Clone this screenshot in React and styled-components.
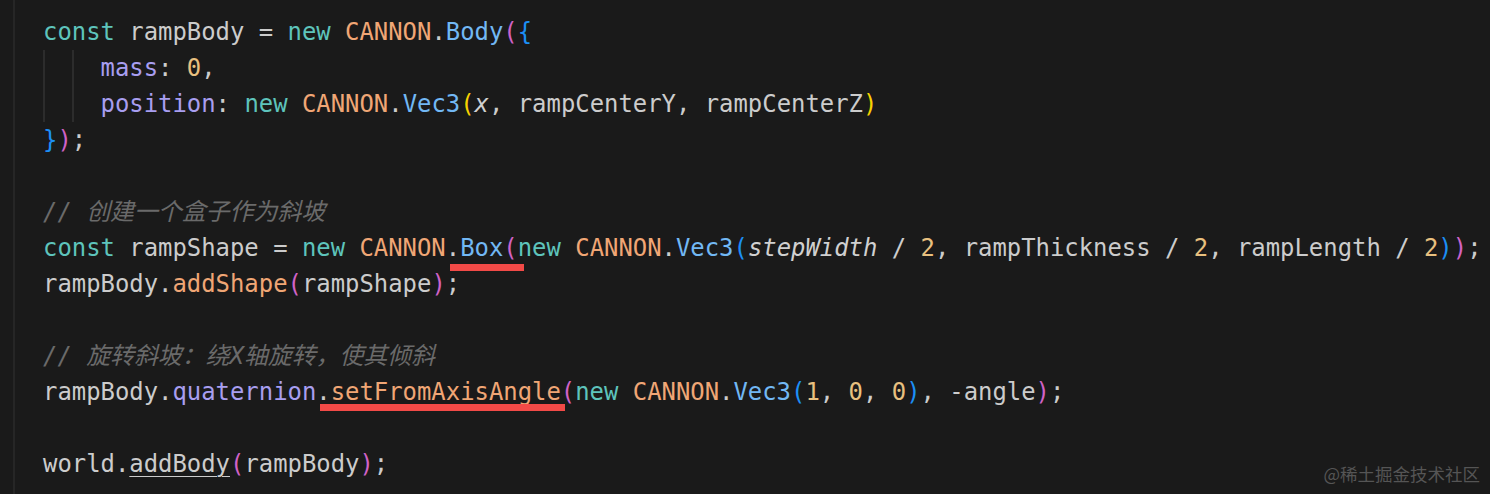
import React from "react";
import styled, { createGlobalStyle } from "styled-components";

const GlobalStyle = createGlobalStyle`
  html, body {
    margin: 0;
    padding: 0;
    background: #1a1a1a;
  }
`;

const Page = styled.div`
  position: relative;
  width: 1490px;
  height: 494px;
  background: #1a1a1a;
  overflow: hidden;
`;

const Editor = styled.div`
  margin-left: 13px;
  padding: 14px 0 12px 28px;
  border-left: 2px solid #262626;
  height: 100%;
  box-sizing: border-box;
  font-family: "DejaVu Sans Mono", "Noto Sans CJK SC", monospace;
  font-size: 23.9px;
  color: #cccccc;
`;

const Line = styled.div`
  height: 36px;
  line-height: 36px;
  white-space: pre;
`;

const Guide = styled.span`
  display: inline-block;
  width: 2ch;
  height: 36px;
  vertical-align: top;
  box-sizing: border-box;
  border-left: 2px solid #2c2c2c;
`;

const Kw = styled.span`
  color: #5ec4bc;
`;

const Cls = styled.span`
  color: #f0a675;
`;

const Fn = styled.span`
  color: #72b8f4;
`;

const Prop = styled.span`
  color: #a89ef0;
`;

const Num = styled.span`
  color: #e8c07f;
`;

const Param = styled.span`
  font-style: italic;
  color: #d0d0d0;
`;

const Cmt = styled.span`
  font-style: italic;
  color: #6a6a6a;
`;

const Linked = styled.span`
  text-decoration: underline;
  text-underline-offset: 4px;
  text-decoration-thickness: 1px;
`;

const bracketColors = {
  yellow: "#f7d200",
  pink: "#d062c6",
  blue: "#1c8ff5",
};

const Br = styled.span`
  color: ${(p) => bracketColors[p.$level]};
`;

const Marked = styled.span`
  position: relative;
  display: inline-block;
  height: 36px;
  vertical-align: top;

  &::after {
    content: "";
    position: absolute;
    left: ${(p) => p.$left}px;
    right: ${(p) => p.$right}px;
    top: ${(p) => p.$top}px;
    height: 7px;
    background: #f24a47;
  }
`;

const Watermark = styled.div`
  position: absolute;
  right: 10px;
  bottom: 8px;
  font-family: "Noto Sans CJK SC", "Noto Sans", sans-serif;
  font-size: 17.5px;
  color: #555555;
`;

export default function App() {
  return (
    <Page>
      <GlobalStyle />
      <Editor>
        <Line>
          <Kw>const</Kw> rampBody = <Kw>new</Kw> <Cls>CANNON</Cls>.<Fn>Body</Fn>
          <Br $level="pink">(</Br>
          <Br $level="blue">{"{"}</Br>
        </Line>
        <Line>
          <Guide />
          <Guide />
          <Prop>mass</Prop>: <Num>0</Num>,
        </Line>
        <Line>
          <Guide />
          <Guide />
          <Prop>position</Prop>: <Kw>new</Kw> <Cls>CANNON</Cls>.<Fn>Vec3</Fn>
          <Br $level="yellow">(</Br>
          <Param>x</Param>, rampCenterY, rampCenterZ
          <Br $level="yellow">)</Br>
        </Line>
        <Line>
          <Br $level="blue">{"}"}</Br>
          <Br $level="pink">)</Br>;
        </Line>
        <Line> </Line>
        <Line>
          <Cmt>// 创建一个盒子作为斜坡</Cmt>
        </Line>
        <Line>
          <Kw>const</Kw> rampShape = <Kw>new</Kw> <Cls>CANNON</Cls>
          <Marked $left={4} $right={-6} $top={34}>
            .<Fn>Box</Fn>
            <Br $level="pink">(</Br>
          </Marked>
          <Kw>new</Kw> <Cls>CANNON</Cls>.<Fn>Vec3</Fn>
          <Br $level="blue">(</Br>
          <Param>stepWidth</Param> / <Num>2</Num>, rampThickness / <Num>2</Num>,
          rampLength / <Num>2</Num>
          <Br $level="blue">)</Br>
          <Br $level="pink">)</Br>;
        </Line>
        <Line>
          rampBody.<Cls>addShape</Cls>
          <Br $level="pink">(</Br>rampShape<Br $level="pink">)</Br>;
        </Line>
        <Line> </Line>
        <Line>
          <Cmt>// 旋转斜坡：绕X轴旋转，使其倾斜</Cmt>
        </Line>
        <Line>
          rampBody.<Prop>quaternion</Prop>
          <Marked $left={4} $right={-4} $top={30}>
            .<Cls>setFromAxisAngle</Cls>
          </Marked>
          <Br $level="pink">(</Br>
          <Kw>new</Kw> <Cls>CANNON</Cls>.<Fn>Vec3</Fn>
          <Br $level="blue">(</Br>
          <Num>1</Num>, <Num>0</Num>, <Num>0</Num>
          <Br $level="blue">)</Br>, -angle<Br $level="pink">)</Br>;
        </Line>
        <Line> </Line>
        <Line>
          world.<Linked>addBody</Linked>
          <Br $level="pink">(</Br>rampBody<Br $level="pink">)</Br>;
        </Line>
      </Editor>
      <Watermark>@稀土掘金技术社区</Watermark>
    </Page>
  );
}
